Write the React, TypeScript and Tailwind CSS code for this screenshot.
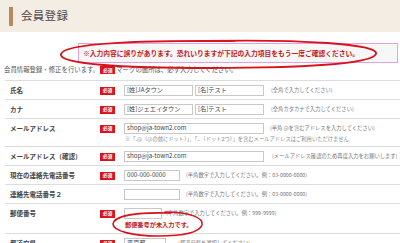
import React from "react";

const F = "font-[family-name:'Noto_Sans_CJK_JP',sans-serif]";

function Badge() {
  return (
    <span className="inline-flex h-[8px] w-[15px] items-center justify-center bg-[#d9141f] text-[4.8px] font-bold leading-none text-white">
      必須
    </span>
  );
}

function Input({ w, value }: { w: number; value?: string }) {
  return (
    <div
      className="flex h-[11px] shrink-0 items-center border border-[#c8c8c8] bg-white px-[2px] text-[6.2px] leading-none whitespace-nowrap text-[#444]"
      style={{ width: w }}
    >
      {value}
    </div>
  );
}

function Note({ children, ml }: { children: React.ReactNode; ml: number }) {
  return (
    <div className="whitespace-nowrap text-[5.3px] leading-[11px] text-[#777]" style={{ marginLeft: ml }}>
      {children}
    </div>
  );
}

function Row({
  label,
  required,
  children,
}: {
  label: string;
  required?: boolean;
  children: React.ReactNode;
}) {
  return (
    <div className="flex items-start border-b border-[#dcdcdc] pt-[4px] pb-[3px]">
      <div className="w-[95px] shrink-0 pl-[5px] text-[6.5px] font-bold leading-[11px] whitespace-nowrap text-[#444]">{label}</div>
      <div className="flex h-[11px] w-[24px] shrink-0 items-center">{required && <Badge />}</div>
      <div className="flex min-w-0 flex-col">{children}</div>
    </div>
  );
}

export default function App() {
  return (
    <div className={`relative h-[243px] w-[400px] overflow-hidden bg-white text-[6px] leading-none ${F}`}>
      {/* header */}
      <div className="flex h-[32px] items-center bg-[#f3ede3] pl-[9px]">
        <div className="h-[19px] w-[4px] bg-[#b48b5e]" />
        <div className="ml-[8px] text-[11.5px] leading-none tracking-[0.3px] text-[#4a4a4a]">会員登録</div>
      </div>

      {/* error box */}
      <div className="ml-[78px] mt-[11px] flex h-[20px] w-[320px] items-center border border-[#e3a2dc] bg-[#f8f7f8] pl-[4px]">
        <div className="whitespace-nowrap text-[6.75px] font-bold leading-none text-[#c3161c]">
          ※入力内容に誤りがあります。恐れいりますが下記の入力項目をもう一度ご確認ください。
        </div>
      </div>

      {/* description */}
      <div className="mt-[2px] flex h-[10px] items-center pl-[4px] text-[6.4px] leading-none text-[#555]">
        <div className="whitespace-nowrap">会員情報登録・修正を行います。</div>
        <div className="mx-[1px] flex">
          <Badge />
        </div>
        <div className="whitespace-nowrap">マークの箇所は、必ず入力してください。</div>
      </div>

      {/* table */}
      <div className="ml-[5px] mt-[5px] border-t border-[#dcdcdc]">
        <Row label="氏名" required>
          <div className="flex items-center gap-[2px]">
            <Input w={69} value="[姓]JAタウン" />
            <Input w={69} value="[名]テスト" />
            <Note ml={5}>(全角で入力してください)</Note>
          </div>
        </Row>
        <Row label="カナ" required>
          <div className="flex items-center gap-[2px]">
            <Input w={69} value="[姓]ジェエイタウン" />
            <Input w={69} value="[名]テスト" />
            <Note ml={5}>(全角カタカナで入力してください)</Note>
          </div>
        </Row>
        <Row label="メールアドレス" required>
          <div className="flex items-center">
            <Input w={140} value="shop@ja-town2.com" />
            <Note ml={6}>(半角 @を含むアドレスを入力してください)</Note>
          </div>
          <div className="mt-[1px] h-[8px] pl-[1px] text-[5.3px] leading-[8px] whitespace-nowrap text-[#888]">
            ※「.@（@の前にドット）」、「..（ドット2つ）」を含むメールアドレスはご利用いただけません
          </div>
        </Row>
        <Row label="メールアドレス（確認）" required>
          <div className="flex items-center">
            <Input w={140} value="shop@ja-town2.com" />
            <Note ml={8}>(メールアドレス確認のため再度入力をお願いします)</Note>
          </div>
        </Row>
        <Row label="現在の連絡先電話番号" required>
          <div className="flex items-center">
            <Input w={56} value="000-000-0000" />
            <Note ml={6}>(半角数字で入力してください。例：03-0000-0000)</Note>
          </div>
        </Row>
        <Row label="連絡先電話番号２">
          <div className="flex items-center">
            <Input w={56} />
            <Note ml={6}>(半角数字で入力してください。例：03-0000-0000)</Note>
          </div>
        </Row>
        <Row label="郵便番号" required>
          <div className="flex items-center">
            <Input w={38} />
            <Note ml={4}>(半角数字で入力してください。例：999-9999)</Note>
          </div>
          <div className="h-[11px] pl-[1px] text-[6.2px] font-bold leading-[11px] whitespace-nowrap text-[#c3161c]">
            郵便番号が未入力です。
          </div>
        </Row>
        <Row label="都道府県" required>
          <div className="flex items-center">
            <Input w={42} value="東京都" />
            <Note ml={12}>(都道府県を選択してください)</Note>
          </div>
        </Row>
      </div>

      {/* hand-drawn ellipses */}
      <svg className="pointer-events-none absolute left-0 top-0" width="400" height="243" viewBox="0 0 400 243">
        <path
          d="M 205 41 C 300 39, 380 44, 376 54 C 372 64, 300 68, 210 68 C 120 68, 58 64, 61 54 C 64 44, 130 40, 235 41"
          fill="none"
          stroke="#d8121c"
          strokeWidth="1.8"
          strokeLinecap="round"
        />
        <path
          d="M 165 212 C 190 212, 204 218, 202 225 C 199 233, 180 236, 158 236 C 133 236, 113 231, 113 224 C 114 216, 135 212, 170 213"
          fill="none"
          stroke="#d8121c"
          strokeWidth="1.6"
          strokeLinecap="round"
        />
      </svg>
    </div>
  );
}
